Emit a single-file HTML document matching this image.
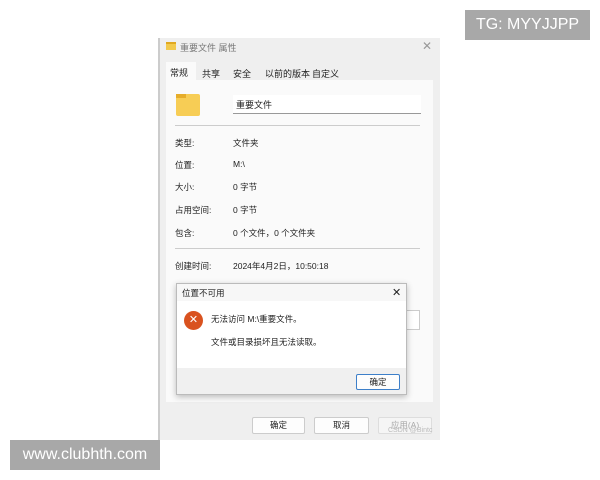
<!DOCTYPE html>
<html><head><meta charset="utf-8"><style>
*{margin:0;padding:0;box-sizing:border-box}
body{width:600px;height:480px;background:#fff;position:relative;overflow:hidden;font-family:"Liberation Sans","Noto Sans CJK SC",sans-serif;font-size:8.5px;color:#222}
.a{position:absolute;white-space:nowrap}
</style></head><body>
<div class="a" style="left:465px;top:10px;width:125px;height:30px;background:#a8a8a8;color:#fff;font-size:16px;line-height:30px;text-align:center">TG: MYYJJPP</div>
<div class="a" style="left:10px;top:440px;width:150px;height:30px;background:#a8a8a8;color:#fff;font-size:16px;line-height:30px;text-align:center">www.clubhth.com</div>

<div class="a" style="left:158px;top:38px;width:282px;height:402px;background:#efefef;border-left:2px solid #ccc"></div>
<div class="a" style="left:166px;top:42px;width:10px;height:8px;background:#f2c94c;border-top:2px solid #e0a820"></div>
<div class="a" style="left:180px;top:41px;color:#777;font-size:9px">重要文件 属性</div>
<div class="a" style="left:422px;top:39px;color:#999;font-size:12px">✕</div>
<div class="a" style="left:166px;top:62px;width:30px;height:19px;background:#fafafa"></div>
<div class="a" style="left:170px;top:66px;font-size:9px">常规</div>
<div class="a" style="left:202px;top:67px;font-size:9px">共享</div>
<div class="a" style="left:233px;top:67px;font-size:9px">安全</div>
<div class="a" style="left:265px;top:67px;font-size:9px">以前的版本</div>
<div class="a" style="left:312px;top:67px;font-size:9px">自定义</div>
<div class="a" style="left:166px;top:80px;width:267px;height:322px;background:#fafafa"></div>
<div class="a" style="left:176px;top:94px;width:24px;height:22px;background:#f7cd55;border-radius:2px"></div>
<div class="a" style="left:176px;top:94px;width:10px;height:4px;background:#e6ad2a"></div>
<div class="a" style="left:233px;top:95px;width:188px;height:19px;background:#fff;border-bottom:1px solid #999"></div>
<div class="a" style="left:236px;top:98px;font-size:9px">重要文件</div>
<div class="a" style="left:175px;top:125px;width:245px;height:1px;background:#ccc"></div>
<div class="a" style="left:175px;top:137px">类型:</div><div class="a" style="left:233px;top:137px">文件夹</div>
<div class="a" style="left:175px;top:159px">位置:</div><div class="a" style="left:233px;top:159px">M:\</div>
<div class="a" style="left:175px;top:181px">大小:</div><div class="a" style="left:233px;top:181px">0 字节</div>
<div class="a" style="left:175px;top:204px">占用空间:</div><div class="a" style="left:233px;top:204px">0 字节</div>
<div class="a" style="left:175px;top:227px">包含:</div><div class="a" style="left:233px;top:227px">0 个文件，0 个文件夹</div>
<div class="a" style="left:175px;top:248px;width:245px;height:1px;background:#ccc"></div>
<div class="a" style="left:175px;top:260px">创建时间:</div><div class="a" style="left:233px;top:260px">2024年4月2日，10:50:18</div>
<div class="a" style="left:380px;top:310px;width:40px;height:20px;background:#fff;border:1px solid #ccc"></div>

<div class="a" style="left:176px;top:283px;width:231px;height:112px;background:#fff;border:1px solid #bbb;box-shadow:0 2px 6px rgba(0,0,0,.25)"></div>
<div class="a" style="left:177px;top:284px;width:229px;height:17px;background:#f7f7f7"></div>
<div class="a" style="left:182px;top:287px">位置不可用</div>
<div class="a" style="left:392px;top:286px;font-size:11px">✕</div>
<div class="a" style="left:184px;top:311px;width:19px;height:19px;border-radius:50%;background:#d9521f;color:#fff;font-size:11px;line-height:19px;text-align:center">✕</div>
<div class="a" style="left:211px;top:313px">无法访问 M:\重要文件。</div>
<div class="a" style="left:211px;top:336px">文件或目录损坏且无法读取。</div>
<div class="a" style="left:177px;top:368px;width:229px;height:26px;background:#f0f0f0"></div>
<div class="a" style="left:356px;top:374px;width:44px;height:16px;background:#fdfdfd;border:1px solid #3d7fc9;border-radius:2px;text-align:center;line-height:14px">确定</div>

<div class="a" style="left:252px;top:417px;width:53px;height:17px;background:#fdfdfd;border:1px solid #ccc;border-radius:2px;text-align:center;line-height:15px">确定</div>
<div class="a" style="left:314px;top:417px;width:55px;height:17px;background:#fdfdfd;border:1px solid #ccc;border-radius:2px;text-align:center;line-height:15px">取消</div>
<div class="a" style="left:378px;top:417px;width:54px;height:17px;background:#f5f5f5;border:1px solid #ddd;border-radius:2px;text-align:center;line-height:15px;color:#aaa">应用(A)</div>
<div class="a" style="left:388px;top:427px;color:#bbb;font-size:7px">CSDN @Bintc</div>
</body></html>
